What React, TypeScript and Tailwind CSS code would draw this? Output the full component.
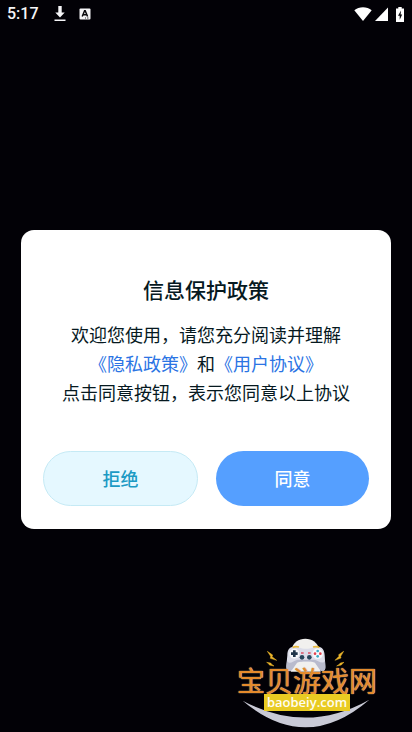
import React from "react";

function DownloadIcon() {
  return (
    <svg width="12" height="16" viewBox="0 0 12 16" aria-hidden="true" fill="#f5f5f7">
      <path d="M4.300 0h3.400v6.500h3L6 11.500 1.300 6.500h3z" />
      <rect x="0.500" y="13.500" width="11" height="1.500" />
    </svg>
  );
}

function KeyboardIcon() {
  return (
    <svg width="12" height="12" viewBox="0 0 12 12" aria-hidden="true">
      <rect x="0.5" y="0.5" width="11" height="11" rx="1" fill="#f5f5f7" />
      <path d="M3.2 8.500 5.600 2.800h0.600L8.600 8.500M4.300 6.700h3.200" fill="none" stroke="#08080c" strokeWidth="1.500" />
      <path d="M6 10h1M8 10h1.500" stroke="#08080c" strokeWidth="0.8" />
    </svg>
  );
}

function WifiIcon() {
  return (
    <svg width="18" height="14" viewBox="0 0 18 14" aria-hidden="true">
      <path d="M9 14 0.300 3.300C5 -0.800 13 -0.800 17.700 3.300z" fill="#fff" />
    </svg>
  );
}

function SignalIcon() {
  return (
    <svg width="13" height="14" viewBox="0 0 13 14" aria-hidden="true">
      <path d="M13 0.500V14H0z" fill="#fff" />
    </svg>
  );
}

function BatteryIcon() {
  return (
    <svg width="8" height="15" viewBox="0 0 8 15" aria-hidden="true">
      <path d="M2.300 0h3.400v1.500H8V15H0V1.500h2.300z" fill="#fff" />
      <path d="M5 3.600 2 8.700h1.700v4L6.200 7.500H4.600z" fill="#08080c" />
    </svg>
  );
}

function StatusBar() {
  return (
    <header className="flex h-7 items-center justify-between pr-2 pl-[7px] font-['Roboto','Liberation_Sans',sans-serif] text-white">
      <div className="flex items-center">
        <span className="text-base leading-7 font-medium text-[#f5f5f7]">5:17</span>
        <span className="ml-[15px]">
          <DownloadIcon />
        </span>
        <span className="ml-[13px]">
          <KeyboardIcon />
        </span>
      </div>
      <div className="flex items-center">
        <WifiIcon />
        <span className="ml-[3px]">
          <SignalIcon />
        </span>
        <span className="ml-2">
          <BatteryIcon />
        </span>
      </div>
    </header>
  );
}

function LogoArt() {
  return (
    <svg className="absolute inset-0" width="160" height="102" viewBox="0 0 480 306" aria-hidden="true">
      <path d="M38 212Q228 315 418 209Q228 373 38 212z" fill="#c9cad6" />
      <path d="M185 60C190 15 262 15 267 60L272 125H182z" fill="#f1f0ee" />
      <path
        d="M193 50C178 50 172 60 172 76L169 108C168 125 181 128 188 117L201 98C206 93 250 93 255 98L268 117C276 128 288 124 286 108L284 76C283 60 277 50 262 50C250 50 246 56 228 56S206 50 193 50z"
        fill="#dcdde9"
      />
      <path d="M171 92 169 110C169 125 181 127 188 117L201 98C206 93 250 93 255 98L268 117C276 128 288 124 286 108L285 92C278 106 263 90 252 89H203C190 92 178 106 171 92z" fill="#b9bbcd" />
      <path d="M188 53c5-4 12-4 19-2M249 51c7-2 14-2 19 2" fill="none" stroke="#e8b93c" strokeWidth="5" />
      <circle cx="193" cy="71" r="15" fill="#f6f7fb" />
      <path d="M189 61h8v6h6v8h-6v6h-8v-6h-6v-8h6z" fill="#20354a" />
      <circle cx="263" cy="71" r="16" fill="#f6f7fb" />
      <circle cx="263" cy="63" r="4" fill="#38a9c4" />
      <circle cx="263" cy="79" r="4" fill="#38a9c4" />
      <circle cx="255" cy="71" r="4" fill="#e3424d" />
      <circle cx="271" cy="71" r="4" fill="#e3424d" />
      <path d="M213 69h8M234 69h8" stroke="#dc5265" strokeWidth="4" />
      <circle cx="216" cy="82" r="7" fill="#28465c" />
      <circle cx="238" cy="82" r="7" fill="#28465c" />
      <g fill="#edb62b" stroke="#edb62b" strokeWidth="1.500">
        <path d="M112 64 128 75 126 80 140 91 121 85 122 79z" />
        <path d="M110 97 122 99 124 102 132 108 118 105 117 102z" />
        <path d="M341 64 326 74 327 79 315 91 333 84 332 79z" />
        <path d="M342 97 331 99 329 102 320 108 334 105 336 102z" />
      </g>
    </svg>
  );
}

function SiteMark() {
  return (
    <div className="absolute right-[22px] bottom-0 h-[102px] w-40">
      <LogoArt />
      <div className="relative flex flex-col items-center pt-9 pr-1.5">
        <strong className="text-[28px] leading-7 font-normal whitespace-nowrap text-[#e58b2c] [text-shadow:0_0_1px_#c9ab88,0_0_1px_#c9ab88]">
          宝贝游戏网
        </strong>
        <span className="flex h-[17px] w-[86px] items-center justify-center bg-[#e9cb22] pb-0.5 font-['Open_Sans','Noto_Sans',sans-serif] text-[13px] leading-4 font-semibold text-[#fffdf0]">
          baobeiy.com
        </span>
      </div>
    </div>
  );
}

function PolicyDialog() {
  return (
    <section
      role="dialog"
      aria-modal="true"
      aria-labelledby="policy-title"
      className="flex-1 rounded-[13px] bg-white px-[22px] pt-11 pb-[23px] text-center text-[#06191f]"
    >
      <h1 id="policy-title" className="text-[21px] leading-[30px] font-medium">
        信息保护政策
      </h1>
      <p className="mt-4 text-lg leading-[29px] whitespace-nowrap">
        欢迎您使用，请您充分阅读并理解
        <br />
        <a href="#privacy" className="text-[#2b74e4]">《隐私政策》</a>和
        <a href="#terms" className="text-[#2b74e4]">《用户协议》</a>
        <br />
        点击同意按钮，表示您同意以上协议
      </p>
      <div className="mt-11 flex gap-[18px]">
        <button type="button" className="h-[55px] flex-1 rounded-full border border-[#c5eaf5] bg-[#e5f8ff] text-lg font-medium text-[#1b9ac4]">
          拒绝
        </button>
        <button type="button" className="h-[55px] flex-1 rounded-full bg-[#559fff] text-lg font-medium text-white">
          同意
        </button>
      </div>
    </section>
  );
}

export default function App() {
  return (
    <div lang="zh-CN" className="relative flex min-h-screen flex-col bg-[#020106] font-['Noto_Sans_CJK_SC',sans-serif]">
      <StatusBar />
      <main className="flex flex-1 items-center px-[21px] pb-0.5">
        <PolicyDialog />
      </main>
      <SiteMark />
    </div>
  );
}
